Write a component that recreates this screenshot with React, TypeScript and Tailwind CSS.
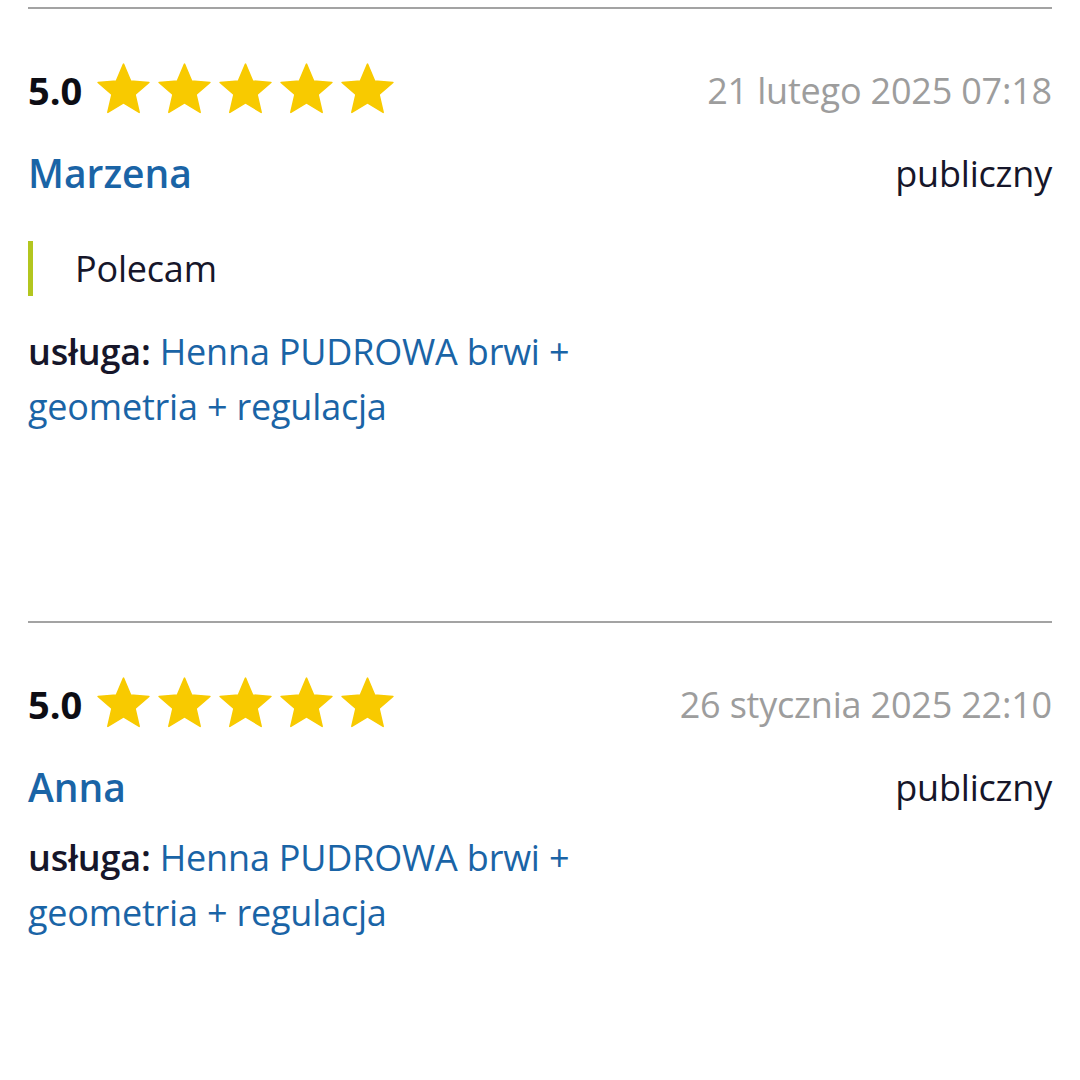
import { useState } from "react";

const reviews = [
    {
        score: "5.0",
        date: "21 lutego 2025 07:18",
        name: "Marzena",
        text: "Polecam",
        service: "Henna PUDROWA brwi + geometria + regulacja",
    },
    {
        score: "5.0",
        date: "26 stycznia 2025 22:10",
        name: "Anna",
        text: "",
        service: "Henna PUDROWA brwi + geometria + regulacja",
    },
];

function Star() {
    return (
        <svg viewBox="0 0 24 24" className="w-[61px] h-[61px] shrink-0">
            <path
                d="M12 17.27L18.18 21l-1.64-7.03L22 9.24l-7.19-.61L12 2 9.19 8.63 2 9.24l5.46 4.73L5.82 21z"
                fill="#f8ca00"
                stroke="#f8ca00"
                strokeWidth="0.6"
                strokeLinejoin="round"
            />
        </svg>
    );
}

function Review({ r, last }: { r: (typeof reviews)[number]; last: boolean }) {
    return (
        <div className={last ? "pb-[140px]" : "pb-[180px]"}>
            <div className="h-[2px] bg-[#a3a3a3] mt-[7px]" />
            <div className="flex items-center justify-between mt-[54px] h-[55px]">
                <div className="flex items-center">
                    <span className="text-[38px] font-bold text-[#0d0d14] mr-[11px]">{r.score}</span>
                    <div className="flex -mt-[3px]">
                        {[0, 1, 2, 3, 4].map((i) => (
                            <Star key={i} />
                        ))}
                    </div>
                </div>
                <span className="text-[36px] tracking-[-0.2px] text-[#9d9d9d]">{r.date}</span>
            </div>
            <div className="flex items-center justify-between mt-[28px] h-[55px]">
                <span className="text-[39px] font-semibold text-[#1a64a6]">{r.name}</span>
                <span className="text-[36px] tracking-[-0.2px] text-[#16162a]">publiczny</span>
            </div>
            {r.text && (
                <div className="mt-[40px] border-l-[5px] border-[#b3c61f] pl-[42px] h-[55px] flex items-center">
                    <span className="text-[36px] tracking-[-0.2px] text-[#16162a]">{r.text}</span>
                </div>
            )}
            <p className={(r.text ? "mt-[28px]" : "mt-[15px]") + " text-[36px] tracking-[-0.2px] leading-[55px] w-[570px]"}>
                <span className="font-semibold text-[#16162a]">usługa:</span>{" "}
                <span className="text-[#1a64a6]">{r.service}</span>
            </p>
        </div>
    );
}

export default function App() {
    const [list] = useState(reviews);
    return (
        <div className="bg-white w-[1080px] h-[1080px] overflow-hidden px-[28px]"
            style={{ fontFamily: '"Open Sans", sans-serif' }}>
            {list.map((r, i) => (
                <Review key={i} r={r} last={i === list.length - 1} />
            ))}
        </div>
    );
}
